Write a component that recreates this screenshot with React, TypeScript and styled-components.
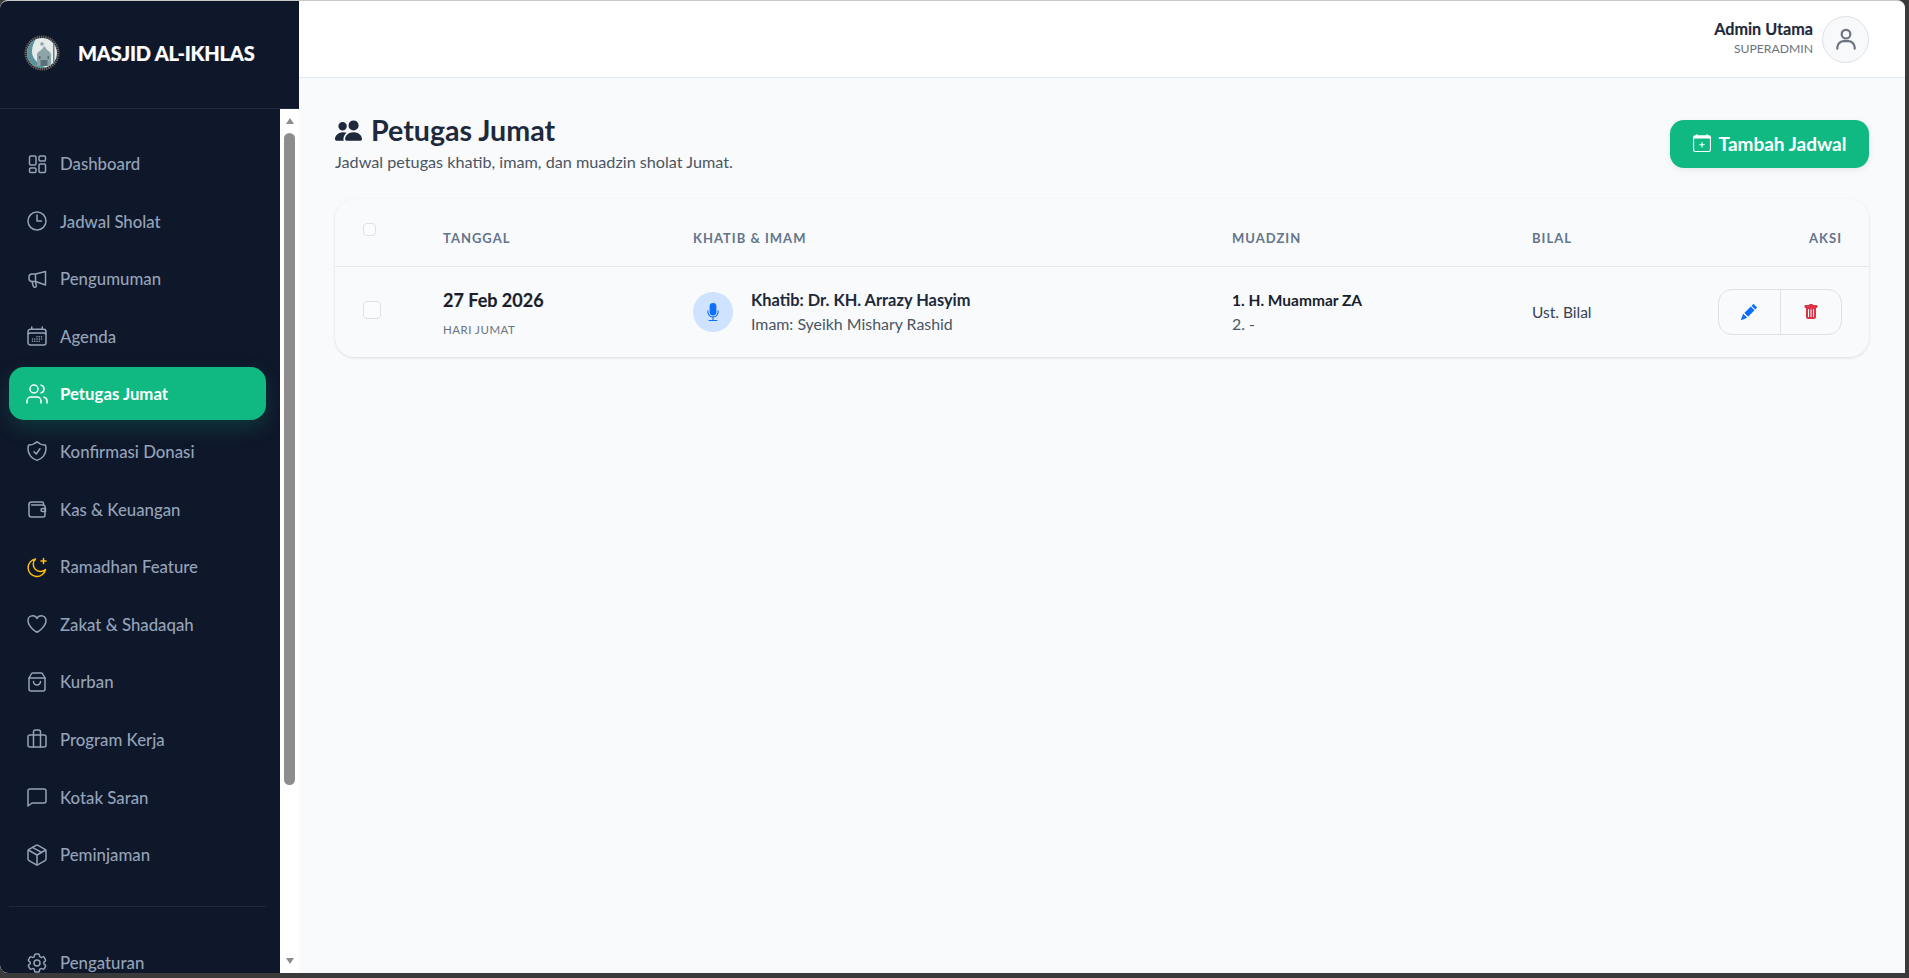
import React from "react";
import styled, { createGlobalStyle } from "styled-components";
import {
  HiOutlineClock,
  HiOutlineCalendarDays,
  HiOutlineShieldCheck,
  HiOutlineHeart,
  HiOutlineCog6Tooth,
} from "react-icons/hi2";
import { BsPeopleFill, BsPencilFill, BsTrashFill, BsMicFill, BsCalendarPlus } from "react-icons/bs";

const Global = createGlobalStyle`
  html, body { margin: 0; height: 100%; background: #3a3a3a; overflow: hidden; }
  body { font-family: "Lato", "Liberation Sans", sans-serif; }
  * { box-sizing: border-box; }
`;

const Frame = styled.div`
  width: 1905px;
  height: 973px;
  display: flex;
  background: #f8fafc;
  border-radius: 8px 8px 0 8px;
  overflow: hidden;
  border-top: 1px solid #c8c8c8;
`;

const Side = styled.aside`
  width: 299px;
  flex: none;
  display: flex;
  flex-direction: column;
  height: 100%;
`;

const Brand = styled.div`
  height: 108px;
  flex: none;
  background: #0f172a;
  border-bottom: 1px solid #1e293b;
  display: flex;
  align-items: center;
  padding: 0 0 3px 24px;
  gap: 18px;
  color: #fff;
  font-weight: 900;
  font-size: 20px;
  letter-spacing: -0.2px;
  -webkit-text-stroke: 0.2px #fff;
`;

const SideBody = styled.div`
  flex: 1;
  display: flex;
  min-height: 0;
  background: #fff;
`;

const Nav = styled.nav`
  width: 280px;
  flex: none;
  background: #0f172a;
  padding: 28px 14px 0 9px;
  overflow: hidden;
`;

const Item = styled.div<{ $active?: boolean }>`
  height: 53px;
  margin-bottom: 4.6px;
  width: 257px;
  display: flex;
  align-items: center;
  gap: 11px;
  padding-left: 16px;
  border-radius: 15px;
  font-size: 16.8px;
  font-weight: ${(p) => (p.$active ? 700 : 500)};
  color: ${(p) => (p.$active ? "#fff" : "#94a3b8")};
  background: ${(p) => (p.$active ? "#10b981" : "transparent")};
  box-shadow: ${(p) => (p.$active ? "0 8px 20px rgba(16,185,129,.2)" : "none")};
  svg { width: 24px; height: 24px; flex: none; stroke-width: 1.5; }
`;

const NavRule = styled.div`
  width: 257px;
  height: 1px;
  background: #1e293b;
  margin: 25px 0 29px;
`;

const Track = styled.div`
  width: 19px;
  flex: none;
  background: #fff;
  display: flex;
  flex-direction: column;
  align-items: center;
  padding-top: 9px;
`;

const ArrowUp = styled.div`
  width: 0;
  height: 0;
  border-left: 4.5px solid transparent;
  border-right: 4.5px solid transparent;
  border-bottom: 6px solid #8d8d8d;
`;

const ArrowDown = styled.div`
  width: 0;
  height: 0;
  border-left: 4.5px solid transparent;
  border-right: 4.5px solid transparent;
  border-top: 6px solid #8d8d8d;
  margin-top: 173px;
`;

const Thumb = styled.div`
  width: 11px;
  height: 652px;
  margin-top: 9px;
  background: #8d8d8d;
  border-radius: 6px;
`;

const Main = styled.main`
  flex: 1;
  min-width: 0;
  display: flex;
  flex-direction: column;
  color: #1e293b;
`;

const Top = styled.header`
  height: 77px;
  flex: none;
  background: #fff;
  border-bottom: 1px solid #e2e8f0;
  display: flex;
  align-items: center;
  justify-content: flex-end;
  gap: 9px;
  padding-right: 36px;
`;

const UserText = styled.div`
  text-align: right;
  display: flex;
  flex-direction: column;
  gap: 2px;
  margin-bottom: 4px;
`;

const UserName = styled.div`
  font-size: 16.2px;
  font-weight: 700;
  color: #1e293b;
  line-height: 20px;
  -webkit-text-stroke: 0.15px #1e293b;
`;

const UserRole = styled.div`
  font-size: 12.2px;
  color: #6b7280;
  line-height: 15px;
`;

const Avatar = styled.div`
  width: 47px;
  height: 47px;
  border-radius: 50%;
  background: #f8f9fa;
  border: 1px solid #dee2e6;
  display: flex;
  align-items: center;
  justify-content: center;
  color: #6b7280;
`;

const Content = styled.div`
  padding: 34px 36px 0 36px;
`;

const PageHead = styled.div`
  display: flex;
  justify-content: space-between;
  align-items: flex-start;
  margin-bottom: 27px;
`;

const Title = styled.h1`
  margin: 0;
  display: flex;
  align-items: center;
  gap: 9px;
  font-size: 28.6px;
  font-weight: 700;
  line-height: 36px;
  color: #1e293b;
`;

const Sub = styled.p`
  margin: 4px 0 0;
  font-size: 16.2px;
  line-height: 20px;
  color: #4b5563;
`;

const AddButton = styled.button`
  width: 199px;
  height: 48px;
  margin-top: 8px;
  padding: 0 0 2px;
  border: 0;
  border-radius: 14px;
  background: #10b981;
  color: #fff;
  font: 700 19px "Lato", sans-serif;
  display: flex;
  align-items: center;
  justify-content: center;
  gap: 8px;
  box-shadow: 0 2px 6px rgba(0, 0, 0, 0.08);
`;

const Card = styled.section`
  border-radius: 20px;
  box-shadow: 0 1px 3px rgba(0, 0, 0, 0.12);
  height: 158px;
`;

const Grid = styled.div<{ $head?: boolean }>`
  display: grid;
  grid-template-columns: 80px 250px 539px 300px 1fr;
  align-items: center;
  padding: ${(p) => (p.$head ? "10px 0 0 28px" : "0 0 0 28px")};
  height: ${(p) => (p.$head ? "68px" : "90px")};
  border-bottom: ${(p) => (p.$head ? "1px solid #e2e8f0" : "0")};
`;

const Split = styled.div`
  display: flex;
  align-items: center;
  justify-content: space-between;
`;

const Head = styled.div<{ $right?: boolean }>`
  font-size: 13px;
  font-weight: 700;
  letter-spacing: 1px;
  color: #64748b;
  padding-right: ${(p) => (p.$right ? "27px" : "0")};
`;

const Box = styled.div<{ $small?: boolean }>`
  width: ${(p) => (p.$small ? "13px" : "18px")};
  height: ${(p) => (p.$small ? "13px" : "18px")};
  border: 1px solid #dee2e6;
  border-radius: 4px;
  background: #fbfcfd;
  margin-bottom: ${(p) => (p.$small ? "17px" : "4px")};
`;

const DateMain = styled.div`
  font-size: 18px;
  font-weight: 700;
  color: #1a1f2b;
  line-height: 24px;
  -webkit-text-stroke: 0.15px #1a1f2b;
`;

const DateSub = styled.div`
  font-size: 11.5px;
  letter-spacing: 0.5px;
  line-height: 15px;
  color: #6b7280;
  margin-top: 10px;
`;

const Person = styled.div`
  display: flex;
  align-items: center;
  gap: 18px;
`;

const Mic = styled.div`
  width: 40px;
  height: 40px;
  border-radius: 50%;
  background: #cfe2ff;
  color: #0d6efd;
  display: flex;
  align-items: center;
  justify-content: center;
`;

const Strong = styled.div<{ $small?: boolean }>`
  font-size: ${(p) => (p.$small ? "15.5px" : "16.4px")};
  font-weight: 700;
  color: ${(p) => (p.$small ? "#1a1f2b" : "#1e293b")};
  line-height: 20px;
`;

const Light = styled.div`
  font-size: 15.9px;
  color: #4b5563;
  line-height: 20px;
  margin-top: 4px;
`;

const Bilal = styled.div`
  font-size: 15.5px;
  color: #374151;
  line-height: 20px;
`;

const Actions = styled.div`
  margin: 0 27px 1px 0;
  display: flex;
  width: 124px;
  height: 46px;
  border: 1px solid #dee2e6;
  border-radius: 14px;
`;

const Action = styled.div<{ $color: string; $line?: boolean }>`
  flex: 1;
  display: flex;
  align-items: center;
  justify-content: center;
  color: ${(p) => p.$color};
  border-left: ${(p) => (p.$line ? "1px solid #dee2e6" : "0")};
`;

const LogoMark = () => (
  <svg width="36" height="36" viewBox="0 0 36 36">
    <circle cx="18" cy="18" r="16.2" fill="none" stroke="#6a625c" strokeWidth="2.6" strokeDasharray="1.4 0.8" />
    <circle cx="18" cy="18" r="15" fill="#e4ebe9" />
    <path d="M12 4.300a15 15 0 0 0 1 28 15 15 0 0 0 10 .2C16 31 8 24 8 17c0-5 1.500-9.500 4-12.700z" fill="#5a949a" />
    <circle cx="18" cy="9" r="1.800" fill="#8aa3a5" />
    <path d="M13 31V20c0-3.500 5-4.500 6.500-8 .4-1 1.200-1 1.600 0C22.500 15.500 27 16.500 27 20v11z" fill="#8ea4a8" />
    <path d="M16.500 25h7v6h-7z" fill="#566f78" />
    <path d="M15 21h1.500v3H15zM23.500 21H25v3h-1.500z" fill="#566f78" />
    <path d="M29 8h1.500v21H29z" fill="#6c8389" />
  </svg>
);

const Glyph = ({ children }: { children: React.ReactNode }) => (
  <svg viewBox="0 0 24 24" fill="none" stroke="currentColor" strokeWidth="1.5" strokeLinecap="round" strokeLinejoin="round">
    {children}
  </svg>
);

const DashIcon = () => (
  <Glyph>
    <rect x="4.500" y="4" width="6.500" height="9" rx="1.200" />
    <rect x="14" y="4" width="6.500" height="5" rx="1.200" />
    <rect x="14" y="12" width="6.500" height="8.500" rx="1.200" />
    <rect x="4.500" y="16" width="6.500" height="4.500" rx="1.200" />
  </Glyph>
);

const MegaIcon = () => (
  <Glyph>
    <path d="M20.500 4.500v13.500l-10-3.500H7a3 3 0 0 1-3-3v-1.500a3 3 0 0 1 3-3h3.500z" />
    <path d="M10.500 7.500v7" />
    <path d="M7 14.500l1.400 5a1.600 1.600 0 0 0 3-.9l-1-4" />
  </Glyph>
);

const UsersIcon = () => (
  <Glyph>
    <path d="M16 21v-2a4 4 0 0 0-4-4H6a4 4 0 0 0-4 4v2" />
    <circle cx="9" cy="7" r="4" />
    <path d="M22 21v-2a4 4 0 0 0-3-3.870" />
    <path d="M16 3.130a4 4 0 0 1 0 7.750" />
  </Glyph>
);

const WalletIcon = () => (
  <Glyph>
    <path d="M4 7.500A2.500 2.500 0 0 1 6.500 5H17a1.500 1.500 0 0 1 1.500 1.500V8" />
    <path d="M4 7.500v10A2.500 2.500 0 0 0 6.500 20H18a2 2 0 0 0 2-2V10a2 2 0 0 0-2-2H6.500" />
    <path d="M20.500 11.500h-3a1.500 1.500 0 0 0 0 3h3z" />
  </Glyph>
);

const MoonIcon = () => (
  <svg viewBox="0 0 24 24" fill="none" stroke="#ffc107" strokeWidth="1.9" strokeLinecap="round" strokeLinejoin="round">
    <path d="M20.500 14.500A8.800 8.800 0 1 1 10.500 4a7 7 0 0 0 10 10.500z" />
    <path d="M18.500 3.500v5M16 6h5" />
  </svg>
);

const BagIcon = () => (
  <Glyph>
    <path d="M4 8h16v11a2 2 0 0 1-2 2H6a2 2 0 0 1-2-2z" />
    <path d="M4 8l2-3.500A2.500 2.500 0 0 1 8 3h8a2.500 2.500 0 0 1 2 1.500L20 8" />
    <path d="M8.500 11.500a3.500 3.500 0 0 0 7 0" />
  </Glyph>
);

const CaseIcon = () => (
  <Glyph>
    <rect x="3" y="8" width="18" height="12" rx="2" />
    <path d="M8.500 20V5a2 2 0 0 1 2-2h3a2 2 0 0 1 2 2v15" />
  </Glyph>
);

const ChatIcon = () => (
  <Glyph>
    <path d="M5 4h14a2 2 0 0 1 2 2v10a2 2 0 0 1-2 2H7l-4 3V6a2 2 0 0 1 2-2z" />
  </Glyph>
);

const BoxIcon = () => (
  <Glyph>
    <path d="M11 21.700a2 2 0 0 0 2 0l7-4a2 2 0 0 0 1-1.700v-8a2 2 0 0 0-1-1.700l-7-4a2 2 0 0 0-2 0l-7 4A2 2 0 0 0 3 8v8a2 2 0 0 0 1 1.700z" />
    <path d="M12 22V12" />
    <path d="M3.300 7l8.700 5 8.700-5" />
    <path d="M7.500 4.300l9 5.150" />
  </Glyph>
);

const UserGlyph = () => (
  <svg width="26" height="26" viewBox="0 0 24 24" fill="none" stroke="currentColor" strokeWidth="2" strokeLinecap="round">
    <circle cx="12" cy="7.500" r="4" />
    <path d="M4 21v-1.500A6 6 0 0 1 10 14h4a6 6 0 0 1 6 5.500V21" />
  </svg>
);

const items: [string, React.ReactNode][] = [
  ["Dashboard", <DashIcon />],
  ["Jadwal Sholat", <HiOutlineClock />],
  ["Pengumuman", <MegaIcon />],
  ["Agenda", <HiOutlineCalendarDays />],
  ["Petugas Jumat", <UsersIcon />],
  ["Konfirmasi Donasi", <HiOutlineShieldCheck />],
  ["Kas & Keuangan", <WalletIcon />],
  ["Ramadhan Feature", <MoonIcon />],
  ["Zakat & Shadaqah", <HiOutlineHeart />],
  ["Kurban", <BagIcon />],
  ["Program Kerja", <CaseIcon />],
  ["Kotak Saran", <ChatIcon />],
  ["Peminjaman", <BoxIcon />],
];

export default function App() {
  return (
    <Frame>
      <Global />
      <Side>
        <Brand>
          <LogoMark />
          MASJID AL-IKHLAS
        </Brand>
        <SideBody>
          <Nav>
            {items.map(([label, icon]) => (
              <Item key={label} $active={label === "Petugas Jumat"}>
                {icon}
                {label}
              </Item>
            ))}
            <NavRule />
            <Item>
              <HiOutlineCog6Tooth />
              Pengaturan
            </Item>
          </Nav>
          <Track>
            <ArrowUp />
            <Thumb />
            <ArrowDown />
          </Track>
        </SideBody>
      </Side>
      <Main>
        <Top>
          <UserText>
            <UserName>Admin Utama</UserName>
            <UserRole>SUPERADMIN</UserRole>
          </UserText>
          <Avatar>
            <UserGlyph />
          </Avatar>
        </Top>
        <Content>
          <PageHead>
            <div>
              <Title>
                <BsPeopleFill size={27} />
                Petugas Jumat
              </Title>
              <Sub>Jadwal petugas khatib, imam, dan muadzin sholat Jumat.</Sub>
            </div>
            <AddButton>
              <BsCalendarPlus size={18} />
              Tambah Jadwal
            </AddButton>
          </PageHead>
          <Card>
            <Grid $head>
              <Box $small />
              <Head>TANGGAL</Head>
              <Head>KHATIB &amp; IMAM</Head>
              <Head>MUADZIN</Head>
              <Split>
                <Head>BILAL</Head>
                <Head $right>AKSI</Head>
              </Split>
            </Grid>
            <Grid>
              <Box />
              <div>
                <DateMain>27 Feb 2026</DateMain>
                <DateSub>HARI JUMAT</DateSub>
              </div>
              <Person>
                <Mic>
                  <BsMicFill size={18} />
                </Mic>
                <div>
                  <Strong>Khatib: Dr. KH. Arrazy Hasyim</Strong>
                  <Light>Imam: Syeikh Mishary Rashid</Light>
                </div>
              </Person>
              <div>
                <Strong $small>1. H. Muammar ZA</Strong>
                <Light>2. -</Light>
              </div>
              <Split>
                <Bilal>Ust. Bilal</Bilal>
                <Actions>
                  <Action $color="#0d6efd">
                    <BsPencilFill size={16} />
                  </Action>
                  <Action $color="#dc3545" $line>
                    <BsTrashFill size={16} />
                  </Action>
                </Actions>
              </Split>
            </Grid>
          </Card>
        </Content>
      </Main>
    </Frame>
  );
}
